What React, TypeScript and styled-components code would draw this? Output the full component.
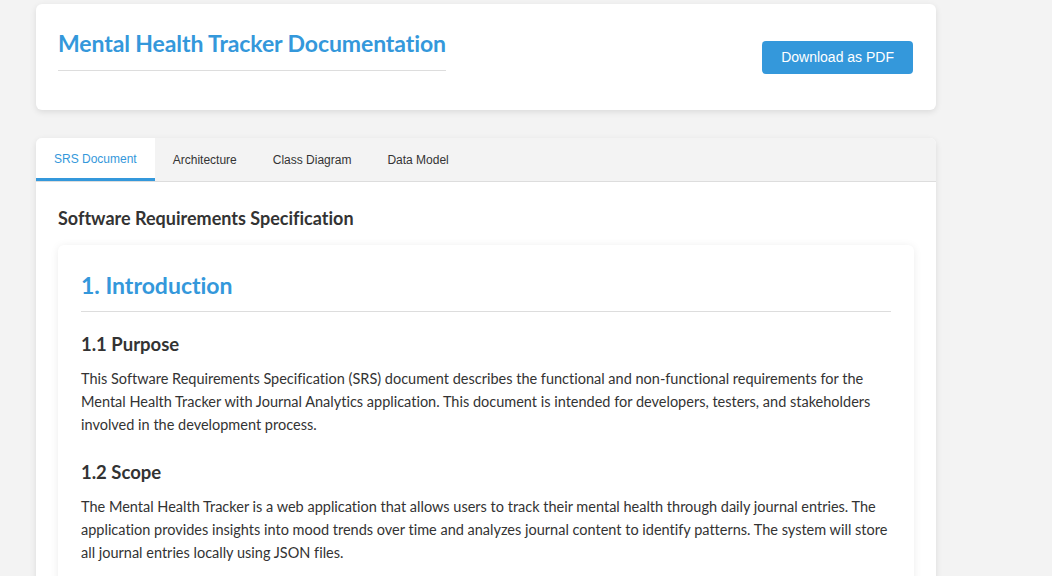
import React, { useState } from "react";
import styled, { createGlobalStyle } from "styled-components";

const GlobalStyle = createGlobalStyle`
  html, body {
    margin: 0;
    padding: 0;
    background: #f3f3f3;
    font-family: Lato, "Open Sans", sans-serif;
    font-variant-ligatures: none;
    color: #333;
  }
`;

const Page = styled.div`
  width: 900px;
  padding: 4px 0 0 36px;
`;

const HeaderCard = styled.header`
  height: 106px;
  box-sizing: border-box;
  background: #fff;
  border-radius: 6px;
  box-shadow: 0 2px 6px rgba(0, 0, 0, 0.1);
  padding: 0 23px 0 22px;
  display: flex;
  align-items: center;
  justify-content: space-between;
`;

const Title = styled.h1`
  margin: 0 0 15px;
  font-size: 23px;
  line-height: 30px;
  font-weight: 700;
  letter-spacing: -0.1px;
  color: #3498db;
  padding-bottom: 12px;
  border-bottom: 1px solid #ddd;
`;

const PdfButton = styled.button`
  background: #3498db;
  color: #fff;
  border: none;
  border-radius: 4px;
  padding: 8px 19px;
  font-family: "Liberation Sans", Arial, sans-serif;
  font-size: 14px;
  line-height: 17px;
  cursor: pointer;
`;

const Panel = styled.section`
  margin-top: 28px;
  background: #fff;
  border-radius: 6px;
  box-shadow: 0 2px 6px rgba(0, 0, 0, 0.1);
  overflow: hidden;
`;

const TabBar = styled.nav`
  display: flex;
  background: #f3f3f3;
  border-bottom: 1px solid #ddd;
`;

const Tab = styled.button<{ $active?: boolean }>`
  border: none;
  border-bottom: 3px solid ${(p) => (p.$active ? "#3498db" : "transparent")};
  background: ${(p) => (p.$active ? "#fff" : "transparent")};
  color: ${(p) => (p.$active ? "#3498db" : "#333")};
  font-family: "Liberation Sans", Arial, sans-serif;
  font-size: 12px;
  line-height: 14px;
  padding: ${(p) => (p.$active ? "14px 18px 12px" : "15px 18px 11px")};
  cursor: pointer;
`;

const Content = styled.div`
  padding: 24px 22px 40px;
`;

const DocTitle = styled.h2`
  margin: 0 0 15px;
  font-size: 18px;
  line-height: 24px;
  font-weight: 700;
  color: #333;
`;

const Section = styled.article`
  background: #fff;
  border-radius: 6px;
  box-shadow: 0 1px 8px rgba(0, 0, 0, 0.08);
  padding: 25px 23px 20px;
`;

const SectionTitle = styled.h3`
  margin: 0;
  font-size: 23px;
  line-height: 30px;
  font-weight: 700;
  color: #3498db;
  padding-bottom: 11px;
  border-bottom: 1px solid #ddd;
`;

const SubTitle = styled.h4`
  margin: 20px 0 11px;
  font-size: 18.5px;
  line-height: 24px;
  font-weight: 700;
  color: #333;
`;

const Para = styled.p`
  margin: 0 0 24px;
  font-size: 14.5px;
  line-height: 23px;
  color: #333;
`;

const tabs = ["SRS Document", "Architecture", "Class Diagram", "Data Model"];

export default function App() {
  const [active, setActive] = useState(0);
  return (
    <>
      <GlobalStyle />
      <Page>
        <HeaderCard>
          <Title>Mental Health Tracker Documentation</Title>
          <PdfButton>Download as PDF</PdfButton>
        </HeaderCard>
        <Panel>
          <TabBar>
            {tabs.map((t, i) => (
              <Tab key={t} $active={i === active} onClick={() => setActive(i)}>
                {t}
              </Tab>
            ))}
          </TabBar>
          <Content>
            <DocTitle>Software Requirements Specification</DocTitle>
            <Section>
              <SectionTitle>1. Introduction</SectionTitle>
              <SubTitle>1.1 Purpose</SubTitle>
              <Para>
                This Software Requirements Specification (SRS) document describes the functional and non-functional
                requirements for the Mental Health Tracker with Journal Analytics application. This document is intended
                for developers, testers, and stakeholders involved in the development process.
              </Para>
              <SubTitle>1.2 Scope</SubTitle>
              <Para>
                The Mental Health Tracker is a web application that allows users to track their mental health through
                daily journal entries. The application provides insights into mood trends over time and analyzes journal
                content to identify patterns. The system will store all journal entries locally using JSON files.
              </Para>
            </Section>
          </Content>
        </Panel>
      </Page>
    </>
  );
}
